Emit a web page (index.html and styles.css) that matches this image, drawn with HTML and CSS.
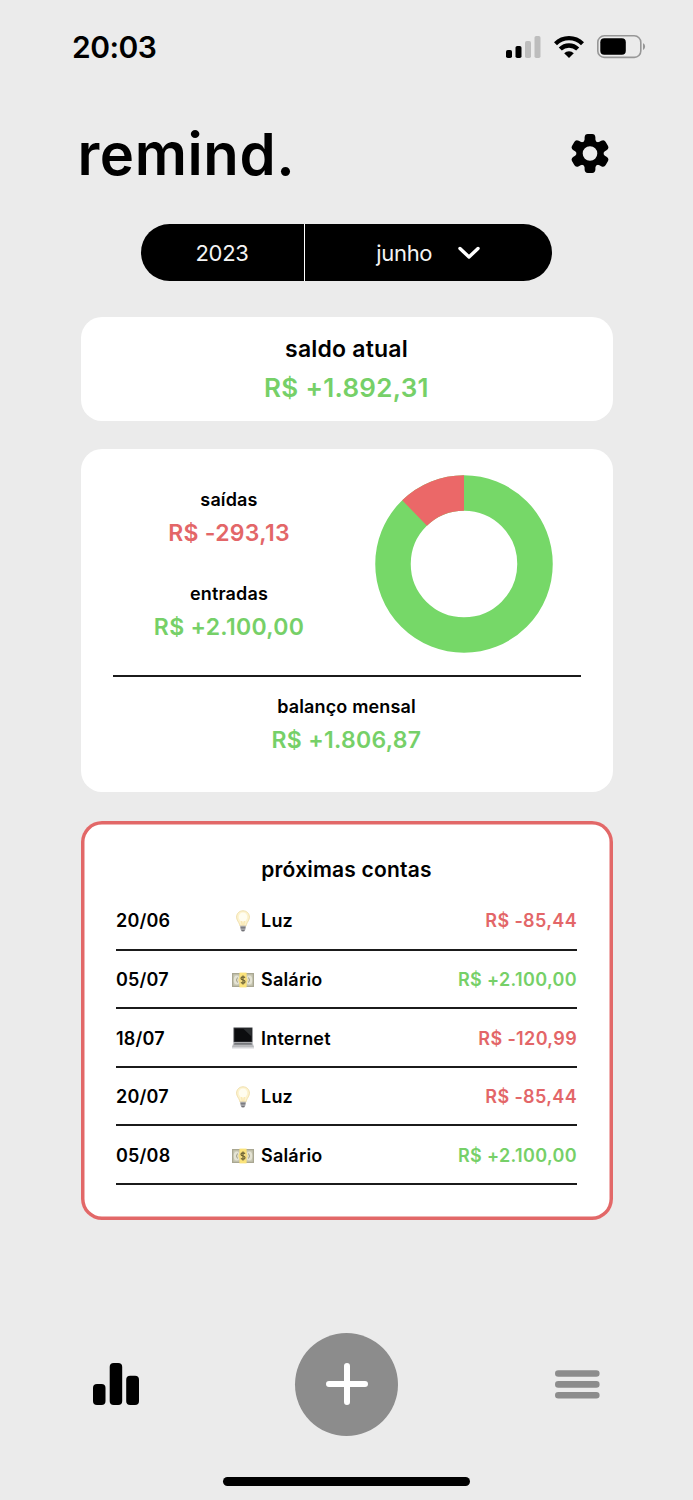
FILE: index.html
```html
<!DOCTYPE html>
<html lang="pt-BR">
<head>
    <meta charset="UTF-8">
    <meta name="viewport" content="width=device-width, initial-scale=1.0">
    <title>remind.</title>
    <link rel="stylesheet" href="styles.css">
</head>
<body>
    <!-- shared icons -->
    <svg width="0" height="0" class="sprite">
        <symbol id="bulb" viewBox="0 0 22 22">
            <path d="M11 0.8c-3.800 0-6.400 2.800-6.400 6.300 0 3 2 4.600 2.900 7.100l.6 2h5.800l.6-2c.9-2.500 2.900-4.100 2.900-7.100C17.400 3.600 14.800.8 11 .8z" fill="#fdf3cf" stroke="#eedda6" stroke-width=".9"/>
            <ellipse cx="11" cy="7" rx="4.200" ry="4.600" fill="#fffdf0"/>
            <path d="M9.600 11l.7 4.500M12.400 11l-.7 4.500" stroke="#f6df9c" stroke-width=".7" fill="none"/>
            <path d="M8.200 15.800h5.600l-.5 4-1.300 1.600h-2l-1.300-1.600z" fill="#a5a5a8"/>
            <path d="M8.500 17.800h5M9.500 20.600h3" stroke="#66666c" stroke-width=".9"/>
        </symbol>
        <symbol id="money" viewBox="0 0 22 22">
            <rect x="0" y="4" width="22" height="14" fill="#a9a792"/>
            <rect x="1.300" y="5.300" width="19.400" height="11.400" fill="#c9c8b4"/>
            <ellipse cx="4.700" cy="11" rx="3" ry="4.500" fill="#e4e3d4"/>
            <ellipse cx="17.300" cy="11" rx="3" ry="4.500" fill="#e4e3d4"/>
            <path d="M5.500 8.500q-2 2.500 0 5M16.500 8.500q2 2.500 0 5" stroke="#a09e89" fill="none"/>
            <rect x="7.400" y="3.600" width="7.200" height="14.800" fill="#fbe37a"/>
            <circle cx="11" cy="11" r="4.600" fill="#f3dc80"/>
            <path d="M13 8.700q-.7-.9-2-.9c-2.700 0-2.700 2.900 0 3.200s2.700 3.200 0 3.200q-1.300 0-2-.9M11 6.500v9" stroke="#6b6132" stroke-width="1.200" fill="none"/>
        </symbol>
        <symbol id="laptop" viewBox="0 0 22 22">
            <path d="M1.500 0.500h19v15h-19z" fill="#3a3c40"/>
            <path d="M2.500 1.500h17v13h-17z" fill="#0c0d0f"/>
            <path d="M11 1.500h8.500v8z" fill="#2b2e30"/>
            <path d="M1.500 15.500h19l1.500 4.500H0z" fill="#b9babd"/>
            <path d="M2.500 16h17l.5 1.800H2z" fill="#77797d"/>
            <path d="M0 20h22v1.500H0z" fill="#d4d5d8"/>
        </symbol>
    </svg>

    <div class="status-bar">
        <span class="time">20:03</span>
        <div class="status-icons">
            <svg width="35" height="22" viewBox="0 0 35 22">
                <rect x="0" y="14" width="6" height="8" rx="1.800"/>
                <rect x="9.500" y="10" width="6" height="12" rx="1.800"/>
                <rect x="19" y="5" width="6" height="17" rx="1.800" fill="#bdbdbd"/>
                <rect x="28.500" y="0" width="6" height="22" rx="1.800" fill="#bdbdbd"/>
            </svg>
            <svg class="wifi" width="30" height="22" viewBox="0 0 30 22">
                <g fill="none" stroke="#000" stroke-width="4.300">
                    <path d="M1.500 7.700a19.200 19.200 0 0 1 27 0"/>
                    <path d="M6.300 13.100a12.300 12.300 0 0 1 17.400 0"/>
                </g>
                <path d="M15 22l-4.800-4.700a6.800 6.800 0 0 1 9.600 0z"/>
            </svg>
            <svg class="battery" width="49" height="24" viewBox="0 0 49 24">
                <rect x=".8" y=".8" width="43" height="21.600" rx="6.500" fill="none" stroke="#979797" stroke-width="1.600"/>
                <rect x="3.300" y="3.300" width="25.500" height="16.500" rx="4"/>
                <path d="M46 8.300c2.800 1 2.800 5.600 0 6.600z" fill="#979797"/>
            </svg>
        </div>
    </div>

    <div class="header">
        <h1>remind.</h1>
        <svg width="38" height="40" viewBox="-19 -19.500 38 40">
            <circle r="10.300" fill="none" stroke="#000" stroke-width="6"/>
            <path id="tooth" d="M-8-10.500Q-5.500-11.800-5.400-14V-16Q-5.200-19.400-2.200-19.400H2.200Q5.200-19.400 5.400-16V-14Q5.500-11.800 8-10.500L4-9H-4z"/>
            <use href="#tooth" transform="rotate(60)"/>
            <use href="#tooth" transform="rotate(120)"/>
            <use href="#tooth" transform="rotate(180)"/>
            <use href="#tooth" transform="rotate(240)"/>
            <use href="#tooth" transform="rotate(300)"/>
        </svg>
    </div>

    <div class="picker">
        <div class="year">2023</div>
        <div class="month">
            <span>junho</span>
            <svg width="22" height="14" viewBox="0 0 22 14">
                <path d="M2 2.500l9 8.500 9-8.500" fill="none" stroke="#fff" stroke-width="3.400" stroke-linecap="round" stroke-linejoin="round"/>
            </svg>
        </div>
    </div>

    <div class="card balance">
        <div class="balance-title">saldo atual</div>
        <div class="balance-value green">R$ +1.892,31</div>
    </div>

    <div class="card summary">
        <div class="summary-top">
            <div class="totals">
                <div class="label">saídas</div>
                <div class="value red">R$ -293,13</div>
                <div class="label second">entradas</div>
                <div class="value green">R$ +2.100,00</div>
            </div>
            <svg class="chart" width="178" height="178" viewBox="0 0 178 178">
                <circle cx="89" cy="89" r="71" fill="none" stroke="#76d868" stroke-width="35.500"/>
                <circle cx="89" cy="89" r="71" fill="none" stroke="#eb6868" stroke-width="35.500" pathLength="100" stroke-dasharray="12.250 87.750" transform="rotate(-134.100 89 89)"/>
            </svg>
        </div>
        <div class="label">balanço mensal</div>
        <div class="value green">R$ +1.806,87</div>
    </div>

    <div class="card bills">
        <h2>próximas contas</h2>
        <div class="bill">
            <span class="date">20/06</span>
            <svg class="emoji" width="22" height="22"><use href="#bulb"/></svg>
            <span class="name">Luz</span>
            <span class="amount red">R$ -85,44</span>
        </div>
        <div class="bill">
            <span class="date">05/07</span>
            <svg class="emoji" width="22" height="22"><use href="#money"/></svg>
            <span class="name">Salário</span>
            <span class="amount green">R$ +2.100,00</span>
        </div>
        <div class="bill">
            <span class="date">18/07</span>
            <svg class="emoji" width="22" height="22"><use href="#laptop"/></svg>
            <span class="name">Internet</span>
            <span class="amount red">R$ -120,99</span>
        </div>
        <div class="bill">
            <span class="date">20/07</span>
            <svg class="emoji" width="22" height="22"><use href="#bulb"/></svg>
            <span class="name">Luz</span>
            <span class="amount red">R$ -85,44</span>
        </div>
        <div class="bill">
            <span class="date">05/08</span>
            <svg class="emoji" width="22" height="22"><use href="#money"/></svg>
            <span class="name">Salário</span>
            <span class="amount green">R$ +2.100,00</span>
        </div>
    </div>

    <div class="tab-bar">
        <svg width="46" height="42" viewBox="0 0 46 42">
            <rect x="0" y="21" width="12.500" height="21" rx="4"/>
            <rect x="16.700" y="0" width="12.500" height="42" rx="4"/>
            <rect x="33.200" y="12.700" width="12.800" height="29.300" rx="4"/>
        </svg>
        <div class="add">
            <svg width="42" height="42" viewBox="0 0 42 42">
                <path d="M21 3v36M3 21h36" stroke="#fff" stroke-width="6" stroke-linecap="round"/>
            </svg>
        </div>
        <svg width="45" height="29" viewBox="0 0 45 29">
            <path d="M3.300 3.500h38M3.300 14.400h38M3.300 25.300h38" stroke="#8c8c8c" stroke-width="6.600" stroke-linecap="round"/>
        </svg>
    </div>

    <div class="home-indicator"></div>
</body>
</html>
```
FILE: styles.css
```css
* {
    box-sizing: border-box;
}

body {
    font-family: Inter, "Liberation Sans", sans-serif;
    font-weight: 580;
    background-color: #ebebeb;
    color: #000;
    margin: 0;
    height: 1500px;
    overflow: hidden;
}

svg {
    display: block;
    flex-shrink: 0;
}

.sprite {
    height: 0;
}

.green {
    color: #76d068;
}

.red {
    color: #e36668;
}

/* Status bar */
.status-bar {
    display: flex;
    justify-content: space-between;
    align-items: center;
    height: 93px;
    padding: 0 47px 0 72px;
}

.time {
    font-size: 30px;
    letter-spacing: -0.500px;
}

.status-icons {
    display: flex;
    align-items: center;
}

.wifi {
    margin-left: 13px;
}

.battery {
    margin-left: 13px;
}

/* Header */
.header {
    display: flex;
    justify-content: space-between;
    align-items: center;
    height: 121px;
    padding: 0 84px 0 77.500px;
}

h1 {
    margin: 0;
    font-size: 58px;
    font-weight: 620;
    letter-spacing: 0.600px;
}

/* Year and month picker */
.picker {
    display: flex;
    width: 411.500px;
    height: 57px;
    margin: 10px 0 0 140.500px;
    border-radius: 29px;
    background-color: #000;
    color: #f4f4f4;
    font-size: 22px;
    font-weight: 400;
    letter-spacing: -0.300px;
    overflow: hidden;
}

.year {
    width: 164px;
    display: flex;
    align-items: center;
    justify-content: center;
    border-right: 1px solid #fff;
}

.month {
    flex: 1;
    display: flex;
    align-items: center;
    justify-content: center;
    gap: 26px;
}

/* Cards */
.card {
    width: 532px;
    margin-left: 80.500px;
    border-radius: 21px;
    background-color: #fff;
    text-align: center;
}

.balance {
    height: 104px;
    margin-top: 36px;
    padding-top: 12px;
}

.balance-title {
    font-size: 23px;
    line-height: 40px;
    letter-spacing: 0.200px;
}

.balance-value {
    font-size: 26px;
    line-height: 37px;
    letter-spacing: 0.300px;
}

.summary {
    height: 343px;
    margin-top: 28px;
    padding: 26px 32px 0;
}

.summary-top {
    display: flex;
    justify-content: space-between;
    height: 202px;
    padding-right: 28px;
    margin-bottom: 15px;
    border-bottom: 2px solid #1b1b1b;
}

.totals {
    width: 233px;
    padding-top: 10px;
}

.label {
    font-size: 18px;
    line-height: 29px;
    letter-spacing: 0.150px;
}

.second {
    margin-top: 27px;
}

.value {
    font-size: 23px;
    line-height: 38px;
    letter-spacing: 0.300px;
}

.bills {
    height: 399px;
    margin-top: 29px;
    padding: 30px 35.500px 0;
    box-shadow: inset 0 0 0 3.500px #e26868;
}

h2 {
    margin: 0;
    font-size: 21px;
    font-weight: 580;
    line-height: 38px;
    letter-spacing: 0.200px;
}

.bill {
    display: flex;
    align-items: center;
    height: 58.600px;
    padding-top: 2px;
    border-bottom: 2px solid #1b1b1b;
    font-size: 18px;
    letter-spacing: 0.200px;
    text-align: left;
}

/* the first row sits a little lower, under the title */
h2 + .bill {
    height: 61.500px;
    padding-top: 4px;
}

.date {
    width: 116px;
}

.emoji {
    margin-right: 7px;
}

.amount {
    margin-left: auto;
    letter-spacing: 0.350px;
}

/* Bottom navigation */
.tab-bar {
    display: flex;
    justify-content: space-between;
    align-items: center;
    height: 104px;
    margin-top: 112px;
    padding: 0 93.500px 0 92.500px;
}

.add {
    display: flex;
    align-items: center;
    justify-content: center;
    width: 103px;
    height: 103px;
    border-radius: 50%;
    background-color: #8c8c8c;
}

.home-indicator {
    width: 247px;
    height: 9px;
    margin: 40.500px auto 0;
    border-radius: 5px;
    background-color: #000;
}
```
